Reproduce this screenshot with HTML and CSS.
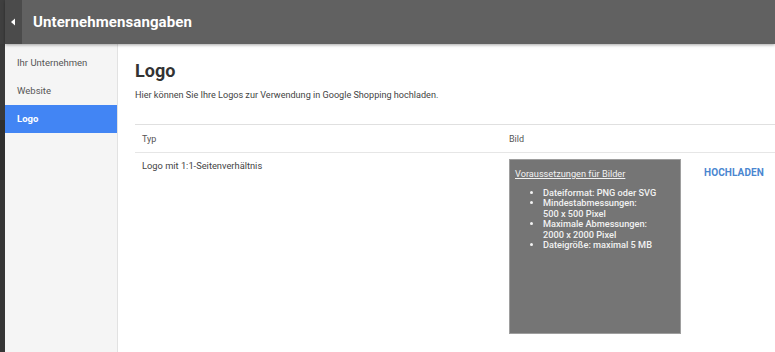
FILE: index.html
```html
<!DOCTYPE html>
<html lang="de">
<head>
<meta charset="utf-8">
<link rel="stylesheet" href="styles.css">
</head>
<body>
<div class="page">
  <div class="edge">
    <div class="edge-top"></div>
    <div class="edge-a"></div>
    <div class="edge-b"></div>
    <div class="edge-c"></div>
  </div>
  <div class="app">
    <header class="topbar">
      <div class="back">
        <svg width="6" height="8" viewBox="0 0 6 8"><path d="M5 0.5 L1 4 L5 7.5 Z" fill="#ffffff"/></svg>
      </div>
      <h1 class="title">Unternehmensangaben</h1>
    </header>
    <div class="content">
      <nav class="sidebar">
        <div class="nav-item">Ihr Unternehmen</div>
        <div class="nav-item">Website</div>
        <div class="nav-item active">Logo</div>
      </nav>
      <main class="main">
        <h2 class="heading">Logo</h2>
        <p class="desc">Hier können Sie Ihre Logos zur Verwendung in Google Shopping hochladen.</p>
        <div class="table">
          <div class="row head">
            <div class="cell type">Typ</div>
            <div class="cell pic">Bild</div>
          </div>
          <div class="row body">
            <div class="cell type">Logo mit 1:1-Seitenverhältnis</div>
            <div class="req">
              <div class="req-title">Voraussetzungen für Bilder</div>
              <ul class="req-list">
                <li>Dateiformat: PNG oder SVG</li>
                <li>Mindestabmessungen:<br>500 x 500 Pixel</li>
                <li>Maximale Abmessungen:<br>2000 x 2000 Pixel</li>
                <li>Dateigröße: maximal 5 MB</li>
              </ul>
            </div>
            <div class="action">HOCHLADEN</div>
          </div>
        </div>
      </main>
    </div>
  </div>
</div>
</body>
</html>
```
FILE: styles.css
```css
* { box-sizing: border-box; }
html, body { margin: 0; padding: 0; }
body {
  width: 775px;
  height: 352px;
  overflow: hidden;
  font-family: Roboto, "Liberation Sans", sans-serif;
  background: #ffffff;
}
.page {
  display: flex;
  height: 352px;
}
.edge {
  width: 5px;
  flex: none;
  display: flex;
  flex-direction: column;
}
.edge-top { height: 44px; background: #3f3f3f; }
.edge-a { height: 76px; background: #3a3a3a; }
.edge-b { height: 60px; background: #2f2f2f; }
.edge-c { flex: 1; background: #363636; }
.app {
  flex: 1;
  display: flex;
  flex-direction: column;
  min-width: 0;
}
.topbar {
  height: 44px;
  flex: none;
  display: flex;
  align-items: center;
  background: #616161;
  box-shadow: 0 1px 3px rgba(0,0,0,0.35);
  position: relative;
  z-index: 2;
}
.back {
  width: 17px;
  height: 44px;
  background: #4b4b4b;
  display: flex;
  align-items: center;
  justify-content: center;
  padding-right: 1px;
}
.title {
  margin: 0 0 0 11px;
  font-size: 15px;
  font-weight: 700;
  color: #ffffff;
  letter-spacing: 0.1px;
}
.content {
  flex: 1;
  display: flex;
  min-height: 0;
}
.sidebar {
  width: 113px;
  flex: none;
  background: #f5f5f5;
  border-right: 1px solid #e2e2e2;
  padding-top: 5px;
}
.nav-item {
  height: 28px;
  line-height: 28px;
  padding-left: 12px;
  font-size: 9.5px;
  color: #555555;
}
.nav-item.active {
  background: #4285f4;
  color: #ffffff;
  font-weight: 700;
}
.main {
  flex: 1;
  padding-left: 17px;
  min-width: 0;
}
.heading {
  margin: 16px 0 0 0;
  font-size: 18px;
  font-weight: 700;
  color: #333333;
  line-height: 22px;
}
.desc {
  margin: 6px 0 0 0;
  font-size: 9.1px;
  color: #444444;
  line-height: 14px;
}
.table {
  margin-top: 22px;
  border-top: 1px solid #e0e0e0;
}
.row {
  display: flex;
}
.row.head {
  height: 28px;
  align-items: center;
  border-bottom: 1px solid #e6e6e6;
}
.cell {
  font-size: 9px;
  color: #555555;
}
.cell.type {
  width: 367px;
  flex: none;
  padding-left: 7px;
}
.cell.pic {
  padding-left: 7px;
}
.row.body {
  padding-top: 6px;
  align-items: flex-start;
}
.row.body .cell.type {
  font-size: 9.3px;
  color: #444444;
  padding-top: 1px;
}
.req {
  margin-left: 7px;
  width: 172px;
  height: 175px;
  flex: none;
  background: #757575;
  border: 1px solid #9e9e9e;
  padding: 8px 5px;
  color: #f2f2f2;
  font-size: 9.2px;
}
.req-title {
  text-decoration: underline;
  line-height: 12px;
}
.req-list {
  margin: 8px 0 0 0;
  padding-left: 28px;
  font-weight: 500;
  line-height: 10.4px;
}
.req-list li { margin: 0; }
.action {
  margin-left: 23px;
  padding-top: 8px;
  font-size: 10px;
  font-weight: 700;
  color: #4a86d0;
  letter-spacing: 0.1px;
}
```
